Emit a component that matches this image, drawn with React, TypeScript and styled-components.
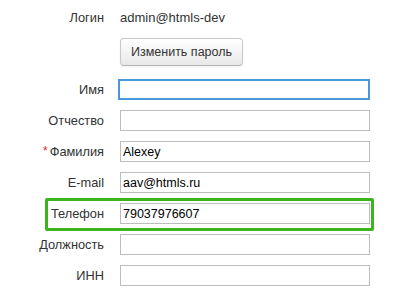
import React from "react";
import styled, { createGlobalStyle, css } from "styled-components";

const GlobalStyle = createGlobalStyle`
  html, body {
    margin: 0;
    padding: 0;
    background: #ffffff;
  }
  body {
    font-family: "Liberation Sans", Arial, sans-serif;
    font-size: 13px;
    color: #333333;
  }
`;

const ProfileForm = styled.form`
  display: grid;
  grid-template-columns: 104px 250px;
  column-gap: 16px;
  row-gap: 10px;
  padding: 7px 0 0 0;
  width: 405px;
`;

const Row = styled.div<{ $highlight?: boolean }>`
  display: contents;
  ${(p) =>
    p.$highlight &&
    css`
      display: grid;
      grid-column: 1 / 3;
      grid-template-columns: 104px 250px;
      column-gap: 16px;
      position: relative;
      &::after {
        content: "";
        position: absolute;
        left: 45px;
        right: -4px;
        top: -5px;
        bottom: -7px;
        border: 3px solid #3bb41d;
        border-radius: 2px;
        pointer-events: none;
      }
    `}
`;

const Label = styled.label`
  display: flex;
  align-items: center;
  justify-content: flex-end;
  height: 21px;
  font-size: 12.8px;
  color: #333333;
  white-space: nowrap;
`;

const Required = styled.span`
  color: #e02b20;
  margin-right: 2px;
  font-size: 12px;
  position: relative;
  top: -1px;
`;

const Value = styled.div`
  display: flex;
  align-items: center;
  height: 21px;
  font-size: 13px;
  color: #333333;
`;

const ButtonCell = styled.div`
  grid-column: 2;
  margin-bottom: 3px;
`;

const Button = styled.button`
  height: 28px;
  padding: 0 10px;
  font-family: "Liberation Sans", Arial, sans-serif;
  font-size: 12.5px;
  color: #333333;
  background: linear-gradient(#ffffff, #e8e8e8);
  border: 1px solid #c8c8c8;
  border-bottom-color: #b3b3b3;
  border-radius: 4px;
  box-shadow: inset 0 1px 0 rgba(255, 255, 255, 0.2), 0 1px 2px rgba(0, 0, 0, 0.05);
  cursor: pointer;
`;

const Input = styled.input<{ $focused?: boolean }>`
  box-sizing: border-box;
  width: 250px;
  height: 21px;
  margin: 0;
  padding: 0 2px;
  font-family: "Liberation Sans", Arial, sans-serif;
  font-size: 12.5px;
  color: #000000;
  background: #ffffff;
  border: 1px solid #bdbdbd;
  border-radius: 0;
  outline: none;
  ${(p) =>
    p.$focused &&
    css`
      border: 2px solid #4898db;
      width: 252px;
      margin-left: -2px;
    `}
`;

type Field = {
  label: string;
  value?: string;
  required?: boolean;
  focused?: boolean;
  highlight?: boolean;
};

const fields: Field[] = [
  { label: "Имя", focused: true },
  { label: "Отчество" },
  { label: "Фамилия", value: "Alexey", required: true },
  { label: "E-mail", value: "aav@htmls.ru" },
  { label: "Телефон", value: "79037976607", highlight: true },
  { label: "Должность" },
  { label: "ИНН" },
];

export default function App() {
  return (
    <>
      <GlobalStyle />
      <ProfileForm onSubmit={(e) => e.preventDefault()}>
        <Label>Логин</Label>
        <Value>admin@htmls-dev</Value>
        <ButtonCell>
          <Button type="button">Изменить пароль</Button>
        </ButtonCell>
        {fields.map((f) => (
          <Row key={f.label} $highlight={f.highlight}>
            <Label>
              {f.required && <Required>*</Required>}
              {f.label}
            </Label>
            <Input defaultValue={f.value} $focused={f.focused} />
          </Row>
        ))}
      </ProfileForm>
    </>
  );
}
